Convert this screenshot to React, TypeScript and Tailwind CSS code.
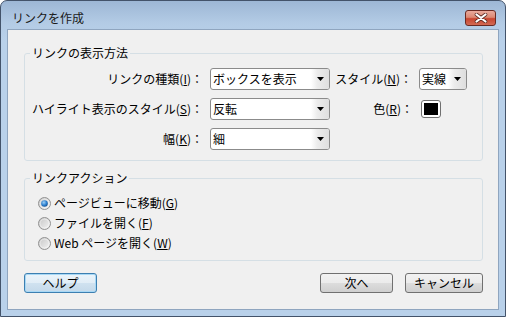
import React from "react";

function M({ c }: { c: string }) {
  return (
    <span>
      (<span className="underline underline-offset-1">{c}</span>)
    </span>
  );
}

function Combo({ w, text }: { w: string; text: string }) {
  return (
    <div className={`${w} h-[22px] border border-[#8b8b8b] rounded-[3px] bg-white flex items-stretch overflow-hidden`}>
      <div className="flex-1 flex items-center pl-[2px] whitespace-nowrap overflow-hidden">{text}</div>
      <div className="w-[18px] flex items-center justify-center bg-[linear-gradient(90deg,#ffffff_0%,#ececec_35%,#dedede_100%)]">
        <svg width="7" height="4" viewBox="0 0 7 4">
          <path d="M0 0 H7 L3.5 4 Z" fill="#000" />
        </svg>
      </div>
    </div>
  );
}

function Radio({ checked }: { checked?: boolean }) {
  return (
    <svg width="13" height="13" viewBox="0 0 13 13">
      <defs>
        <linearGradient id="rg" x1="0" y1="0" x2="1" y2="1">
          <stop offset="0" stopColor="#c4c4c4" />
          <stop offset="1" stopColor="#f6f6f6" />
        </linearGradient>
        <radialGradient id="rd" cx="0.4" cy="0.35" r="0.7">
          <stop offset="0" stopColor="#9fd0f5" />
          <stop offset="0.6" stopColor="#2b7fcf" />
          <stop offset="1" stopColor="#1a4f8c" />
        </radialGradient>
      </defs>
      <circle cx="6.5" cy="6.5" r="6" fill="url(#rg)" stroke="#929292" strokeWidth="1" />
      <circle cx="6.5" cy="6.5" r="4.4" fill="none" stroke="#ffffff" strokeWidth="0.8" opacity="0.5" />
      {checked && <circle cx="6.5" cy="6.5" r="3.3" fill="url(#rd)" />}
    </svg>
  );
}

export default function App() {
  return (
    <div className="w-[506px] h-[318px] bg-white font-['Noto_Sans_CJK_JP',sans-serif] text-[12px] leading-[14px] text-black">
      <div className="w-[506px] h-[317px] border border-[#43536a] rounded-t-[7px] bg-[linear-gradient(#9db7d5_0px,#b3cbe5_22px,#b9d1ea_40px)] flex flex-col overflow-hidden">
        <div className="h-[28px] flex items-start justify-between pt-[9px] pl-[11px] pr-[9px]">
          <div className="mt-[1px] text-[#1a1a1a]">リンクを作成</div>
          <div className="w-[31px] h-[16px] border border-[#6a2a22] rounded-[3px] bg-[linear-gradient(#e9aa9c_0%,#dc8873_45%,#c8452f_55%,#d26a54_100%)] flex items-center justify-center">
            <svg width="14" height="10" viewBox="0 0 14 10">
              <path d="M2.5 1.5 L11.5 8.5 M11.5 1.5 L2.5 8.5" stroke="#5b2a22" strokeWidth="3.6" strokeLinecap="round" />
              <path d="M2.5 1.5 L11.5 8.5 M11.5 1.5 L2.5 8.5" stroke="#ffffff" strokeWidth="2.2" strokeLinecap="round" />
            </svg>
          </div>
        </div>
        <div className="mx-[6px] h-[281px] border border-[#8fa5bf] bg-[#f0f0f0] flex flex-col pt-[16px] pl-[16px] pr-[15px]">
          <fieldset className="border border-[#d5dfe5] rounded-[3px] pb-[10px]">
            <legend className="ml-[5px] px-[2px] leading-[14px]">リンクの表示方法</legend>
            <div className="pt-[8px] flex flex-col gap-[8px]">
              <div className="flex items-center h-[22px]">
                <div className="w-[178px] text-right whitespace-nowrap">リンクの種類<M c="I" />：</div>
                <div className="ml-[7px]"><Combo w="w-[120px]" text="ボックスを表示" /></div>
                <div className="w-[82px] text-right whitespace-nowrap">スタイル<M c="N" />：</div>
                <div className="ml-[7px]"><Combo w="w-[48px]" text="実線" /></div>
              </div>
              <div className="flex items-center h-[22px]">
                <div className="w-[178px] text-right whitespace-nowrap">ハイライト表示のスタイル<M c="S" />：</div>
                <div className="ml-[7px]"><Combo w="w-[120px]" text="反転" /></div>
                <div className="w-[83px] text-right whitespace-nowrap">色<M c="R" />：</div>
                <div className="ml-[8px] w-[20px] h-[18px] border border-[#707070] rounded-[3px] bg-white p-[2px]">
                  <div className="w-full h-full bg-black" />
                </div>
              </div>
              <div className="flex items-center h-[22px]">
                <div className="w-[178px] text-right whitespace-nowrap">幅<M c="K" />：</div>
                <div className="ml-[7px]"><Combo w="w-[120px]" text="細" /></div>
              </div>
            </div>
          </fieldset>
          <fieldset className="mt-[10px] border border-[#d5dfe5] rounded-[3px] pb-[7px]">
            <legend className="ml-[5px] px-[2px] leading-[14px]">リンクアクション</legend>
            <div className="pt-[8px] pl-[13px] flex flex-col">
              <div className="flex items-center h-[20px]">
                <Radio checked />
                <span className="ml-[3px]">ページビューに移動<M c="G" /></span>
              </div>
              <div className="flex items-center h-[20px]">
                <Radio />
                <span className="ml-[3px]">ファイルを開く<M c="F" /></span>
              </div>
              <div className="flex items-center h-[20px]">
                <Radio />
                <span className="ml-[3px]">Web ページを開く<M c="W" /></span>
              </div>
            </div>
          </fieldset>
          <div className="mt-[12px] flex items-center">
            <div className="w-[73px] h-[20px] border border-[#3c7fb1] rounded-[3px] bg-[linear-gradient(#eaf4fb_0%,#e1edf6_50%,#d0e2f0_50%,#c4d9ea_100%)] shadow-[inset_0_0_0_1px_#a8d8f5] flex items-center justify-center">ヘルプ</div>
            <div className="ml-auto w-[73px] h-[20px] border border-[#707070] rounded-[3px] bg-[linear-gradient(#f2f2f2_0%,#ebebeb_50%,#dddddd_50%,#cfcfcf_100%)] flex items-center justify-center">次へ</div>
            <div className="ml-[12px] w-[78px] h-[20px] border border-[#707070] rounded-[3px] bg-[linear-gradient(#f2f2f2_0%,#ebebeb_50%,#dddddd_50%,#cfcfcf_100%)] flex items-center justify-center">キャンセル</div>
          </div>
        </div>
      </div>
    </div>
  );
}
